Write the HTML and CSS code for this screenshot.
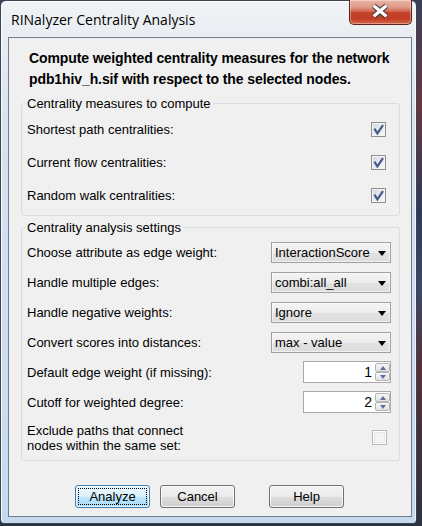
FILE: index.html
```html
<!DOCTYPE html>
<html lang="en">
<head>
<meta charset="utf-8">
<title>RINalyzer Centrality Analysis</title>
<link rel="stylesheet" href="styles.css">
</head>
<body>
<div class="window">
  <div class="titlebar">
    <span class="title">RINalyzer Centrality Analysis</span>
    <button class="close" aria-label="Close">
      <svg width="63" height="24" viewBox="0 0 63 24">
        <path d="M24.5 5.5 L37.5 16.5 M37.5 5.5 L24.5 16.5" stroke="#3c3c3c" stroke-width="5.6" fill="none"/>
        <path d="M24.5 5.5 L37.5 16.5 M37.5 5.5 L24.5 16.5" stroke="#ffffff" stroke-width="3.4" fill="none"/>
      </svg>
    </button>
  </div>
  <div class="client">
    <p class="intro">Compute weighted centrality measures for the network<br>pdb1hiv_h.sif with respect to the selected nodes.</p>

    <fieldset class="group g1">
      <legend>Centrality measures to compute</legend>
      <div class="row"><span>Shortest path centralities:</span><span class="check on"><svg class="tick" width="15" height="15" viewBox="0 0 15 15"><path d="M3.4 6.6 L6.4 11.4 L12 3.2" stroke="#4a5b8e" stroke-width="2.2" fill="none"/></svg></span></div>
      <div class="row"><span>Current flow centralities:</span><span class="check on"><svg class="tick" width="15" height="15" viewBox="0 0 15 15"><path d="M3.4 6.6 L6.4 11.4 L12 3.2" stroke="#4a5b8e" stroke-width="2.2" fill="none"/></svg></span></div>
      <div class="row"><span>Random walk centralities:</span><span class="check on"><svg class="tick" width="15" height="15" viewBox="0 0 15 15"><path d="M3.4 6.6 L6.4 11.4 L12 3.2" stroke="#4a5b8e" stroke-width="2.2" fill="none"/></svg></span></div>
    </fieldset>

    <fieldset class="group g2">
      <legend>Centrality analysis settings</legend>
      <div class="row"><span>Choose attribute as edge weight:</span><div class="combo"><span>InteractionScore</span><i class="arrow"></i></div></div>
      <div class="row"><span>Handle multiple edges:</span><div class="combo"><span>combi:all_all</span><i class="arrow"></i></div></div>
      <div class="row"><span>Handle negative weights:</span><div class="combo"><span>Ignore</span><i class="arrow"></i></div></div>
      <div class="row"><span>Convert scores into distances:</span><div class="combo"><span>max - value</span><i class="arrow"></i></div></div>
      <div class="row"><span>Default edge weight (if missing):</span><div class="spinner"><span class="val">1</span><span class="spin"><span class="up"></span><span class="down"></span></span></div></div>
      <div class="row"><span>Cutoff for weighted degree:</span><div class="spinner"><span class="val">2</span><span class="spin"><span class="up"></span><span class="down"></span></span></div></div>
      <div class="row tall"><span class="two">Exclude paths that connect<br>nodes within the same set:</span><span class="check off"></span></div>
    </fieldset>

    <div class="buttons">
      <button class="btn default">Analyze</button>
      <button class="btn cancel">Cancel</button>
      <button class="btn help">Help</button>
    </div>
  </div>
</div>
</body>
</html>
```
FILE: styles.css
```css
* { box-sizing: border-box; }
html, body { margin: 0; padding: 0; }
body {
  width: 422px;
  height: 526px;
  overflow: hidden;
  background: linear-gradient(to bottom, #3a3f58 0%, #6b3442 20%, #2e3a58 40%, #3c4a66 55%, #5a2d38 70%, #2b3340 100%);
  font-family: "Liberation Sans", Arial, sans-serif;
  font-size: 13px;
  color: #000;
}
.window {
  width: 417px;
  height: 524px;
  border: 1px solid #3b4552;
  border-radius: 6px 6px 4px 4px;
  background: linear-gradient(to bottom, #f0f2f5 0px, #e9edf2 36px, #d6e3f0 120px, #c6d9ee 100%);
  box-shadow: inset 1px 0 0 rgba(255,255,255,.85), inset -1px 0 0 rgba(255,255,255,.6), inset 0 1px 0 rgba(255,255,255,.9);
  padding: 0 4px 6px 7px;
  display: flex;
  flex-direction: column;
}
.titlebar {
  height: 36px;
  display: flex;
  justify-content: space-between;
  align-items: flex-start;
}
.title {
  font-family: "Open Sans", "Noto Sans", sans-serif;
  font-size: 14px;
  line-height: 17px;
  padding-top: 10px;
  margin-left: 3px;
  color: #000;
}
.close {
  width: 63px;
  height: 25px;
  margin-top: -1px;
  padding: 0;
  border: 1px solid #5e2318;
  border-top: none;
  border-radius: 0 0 5px 5px;
  background: linear-gradient(to bottom, #eab3a6 0%, #e09a88 30%, #d0644e 48%, #c4432c 52%, #c23c25 78%, #d6674a 100%);
  box-shadow: inset 0 0 0 1px rgba(255,255,255,.35);
  display: flex;
  align-items: center;
  justify-content: center;
}
.close svg { display: block; }
.client {
  height: 480px;
  border: 1px solid #6e7c8c;
  background: #f0f0f0;
  padding: 10px 11px 0 12px;
  display: flex;
  flex-direction: column;
}
.intro {
  margin: 0 0 0 8px;
  font-weight: bold;
  font-size: 14px;
  letter-spacing: -0.1px;
  line-height: 21px;
  height: 42px;
}
.group {
  margin: 0;
  min-width: 0;
  border: 1px solid #d5dfe5;
  border-radius: 3px;
}
.group legend {
  padding: 0 2px;
  margin-left: -2px;
  line-height: 15px;
  font-size: 13px;
}
.g1 { margin-top: 6px; padding: 2px 13px 3px 5px; }
.g2 { margin-top: 4px; padding: 2px 8px 2px 5px; }
.row {
  display: flex;
  align-items: center;
  justify-content: space-between;
  line-height: 15px;
}
.g1 .row { height: 33px; }
.g2 .row { height: 30px; }
.g2 .row.tall { height: 41px; }
.check {
  position: relative;
  width: 15px;
  height: 15px;
  border: 1px solid #8e8f8f;
  background: linear-gradient(135deg, #d2d5da 0%, #e6e8eb 45%, #f8f8f8 100%);
  box-shadow: inset 0 0 0 1px #f4f4f4;
}
.tick { position: absolute; left: -1px; top: -1px; }
.check.off {
  margin-right: 4px;
  border-color: #b8b8b8;
  background: #f4f4f4;
  box-shadow: inset 0 0 0 1px #ffffff, inset 0 0 0 2px #e6e6e6;
}
.combo {
  width: 120px;
  height: 21px;
  border: 1px solid #a0a0a0;
  background: linear-gradient(to bottom, #f4f4f4 0%, #ececec 50%, #e2e2e2 51%, #dcdcdc 100%);
  box-shadow: inset 0 0 0 1px rgba(255,255,255,.6);
  display: flex;
  align-items: center;
  justify-content: space-between;
  padding: 0 4px 0 3px;
}
.arrow {
  width: 0;
  height: 0;
  margin-top: 2px;
  border-left: 4.5px solid transparent;
  border-right: 4.5px solid transparent;
  border-top: 5px solid #000;
}
.spinner {
  width: 88px;
  height: 22px;
  border: 1px solid #a8a8a8;
  background: #fff;
  display: flex;
  padding: 1px 0 1px 0;
}
.spinner .val {
  flex: 1;
  text-align: right;
  padding-right: 3px;
  font-size: 14px;
  line-height: 19px;
}
.spin {
  width: 15px;
  display: flex;
  flex-direction: column;
  gap: 0;
}
.spin span {
  flex: 1;
  border: 1px solid #b4b4b4;
  border-radius: 2px;
  background: linear-gradient(to bottom, #f7f7f7, #e2e2e2);
  display: flex;
  align-items: center;
  justify-content: center;
}
.spin .up::after {
  content: "";
  border-left: 3.5px solid transparent;
  border-right: 3.5px solid transparent;
  border-bottom: 4px solid #5e6ea3;
}
.spin .down::after {
  content: "";
  border-left: 3.5px solid transparent;
  border-right: 3.5px solid transparent;
  border-top: 4px solid #5e6ea3;
}
.buttons {
  display: flex;
  margin-top: 24px;
  padding-left: 54px;
}
.btn {
  position: relative;
  width: 75px;
  height: 23px;
  padding: 0;
  border: 1px solid #707070;
  border-radius: 3px;
  background: linear-gradient(to bottom, #f2f2f2 0%, #ebebeb 50%, #dddddd 51%, #cfcfcf 100%);
  box-shadow: inset 0 0 0 1px rgba(255,255,255,.75);
  font-family: "Liberation Sans", Arial, sans-serif;
  font-size: 13px;
  color: #000;
}
.btn.default {
  border-color: #3c7fb1;
  background: linear-gradient(to bottom, #eaf6fd 0%, #d9f0fc 50%, #bee6fd 51%, #a9dbf6 100%);
}
.btn.default::after {
  content: "";
  position: absolute;
  inset: 2px;
  border: 1px dotted #000;
}
.btn.cancel { margin-left: 10px; }
.btn.help { margin-left: 34px; }
```
